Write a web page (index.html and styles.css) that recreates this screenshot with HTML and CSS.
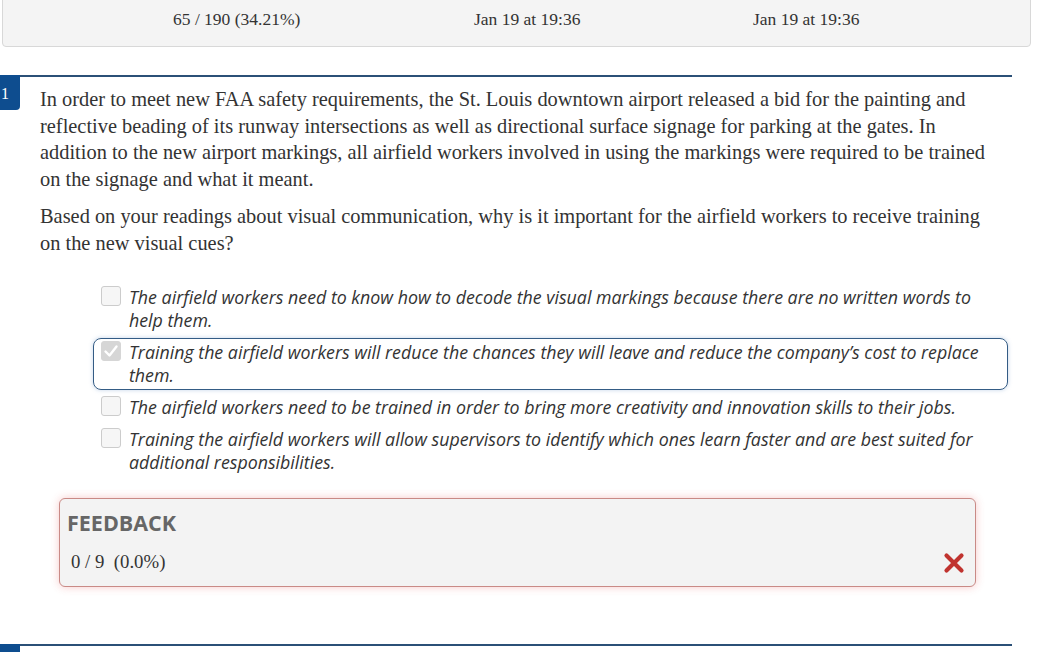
FILE: index.html
```html
<!DOCTYPE html>
<html lang="en">
<head>
  <meta charset="UTF-8" />
  <title>Quiz Results</title>
  <link rel="stylesheet" href="styles.css">
</head>
<body>
  <div class="summary">
    <div class="summary-col">
      <div class="summary-label">Submission Score</div>
      <div class="summary-value">65 / 190 (34.21%)</div>
    </div>
    <div class="summary-col">
      <div class="summary-label">Submit Time</div>
      <div class="summary-value">Jan 19 at 19:36</div>
    </div>
    <div class="summary-col">
      <div class="summary-label">Grade Time</div>
      <div class="summary-value">Jan 19 at 19:36</div>
    </div>
  </div>

  <div class="question">
    <div class="q-num">1</div>
    <div class="q-body">
      <p class="q-text">In order to meet new FAA safety requirements, the St. Louis downtown airport released a bid for the painting and reflective beading of its runway intersections as well as directional surface signage for parking at the gates. In addition to the new airport markings, all airfield workers involved in using the markings were required to be trained on the signage and what it meant.</p>
      <p class="q-text">Based on your readings about visual communication, why is it important for the airfield workers to receive training on the new visual cues?</p>

      <ul class="answers">
        <li class="answer">
          <span class="check"></span>
          <span class="answer-text">The airfield workers need to know how to decode the visual markings because there are no written words to help them.</span>
        </li>
        <li class="answer selected">
          <span class="check checked">
            <svg viewBox="0 0 20 20" width="20" height="20"><path d="M4.5 10.5 L8.5 14.5 L15.5 5.5" fill="none" stroke="#fff" stroke-width="2.4" stroke-linecap="round" stroke-linejoin="round"/></svg>
          </span>
          <span class="answer-text">Training the airfield workers will reduce the chances they will leave and reduce the company’s cost to replace them.</span>
        </li>
        <li class="answer">
          <span class="check"></span>
          <span class="answer-text">The airfield workers need to be trained in order to bring more creativity and innovation skills to their jobs.</span>
        </li>
        <li class="answer">
          <span class="check"></span>
          <span class="answer-text">Training the airfield workers will allow supervisors to identify which ones learn faster and are best suited for additional responsibilities.</span>
        </li>
      </ul>

      <div class="feedback">
        <div class="feedback-title">FEEDBACK</div>
        <div class="feedback-row">
          <span class="feedback-score">0 / 9&nbsp; (0.0%)</span>
          <svg class="wrong" viewBox="0 0 22 22" width="22" height="22"><path d="M3.5 3.5 L18.5 18.5 M18.5 3.5 L3.5 18.5" stroke="#c0332f" stroke-width="4.2" stroke-linecap="round"/></svg>
        </div>
      </div>
    </div>
  </div>

  <div class="question next">
    <div class="q-num"></div>
    <div class="q-body"></div>
  </div>
</body>
</html>
```

FILE: styles.css
```css
* {
  box-sizing: border-box;
}

body {
  margin: 0;
  font-family: "Liberation Serif", "DejaVu Serif", serif;
  color: #2d3b45;
  background: #fff;
  overflow: hidden;
}

/* Score summary */
.summary {
  margin: -24px 7px 0 2px;
  padding: 4px 0 13px 170px;
  background: #f4f4f4;
  border: 1px solid #d8d8d8;
  border-radius: 4px;
  display: grid;
  grid-template-columns: 301px 279px auto;
}

.summary-label {
  font-family: "Open Sans", sans-serif;
  font-weight: 700;
  font-size: 15px;
  line-height: 24px;
  color: #333;
}

.summary-value {
  font-size: 17.5px;
  line-height: 28px;
  color: #333;
}

/* Question */
.question {
  position: relative;
  margin: 28px 26px 0 0;
}

.q-num {
  position: absolute;
  left: 0;
  top: 0;
  width: 20px;
  height: 35px;
  padding: 7px 0 0 1px;
  background: #0e4d8f;
  border-radius: 0 0 4px 0;
  color: #fff;
  font-size: 16px;
  line-height: 24px;
}

.q-body {
  margin-left: 20px;
  border-top: 2px solid #2b5077;
  padding: 9px 0 0 20px;
}

.q-text {
  margin: 0 20px 11px 0;
  font-size: 20.4px;
  line-height: 26.5px;
  color: #333;
}

/* Answers */
.answers {
  list-style: none;
  margin: 27px 4px 0 53px;
  padding: 0;
}

.answer {
  display: flex;
  align-items: flex-start;
  gap: 8px;
  padding: 2px 20px 2px 7px;
  margin-bottom: 3px;
  border: 1px solid transparent;
  border-radius: 8px;
  font-family: "Open Sans", sans-serif;
  font-style: italic;
  font-size: 17.8px;
  line-height: 23px;
  color: #333;
}

.answer.selected {
  border-color: #345c85;
  box-shadow: 0 0 4px rgba(80, 130, 190, 0.35);
}

.check {
  flex: none;
  width: 20px;
  height: 20px;
  border: 1px solid #ccc;
  border-radius: 3px;
  background: #f6f6f6;
}

.check.checked {
  background: #d6d6d6;
  border-color: #d6d6d6;
}

.check svg {
  display: block;
  margin: -1px;
}

/* Feedback */
.feedback {
  margin: 21px 36px 0 19px;
  padding: 10px 10px 11px 7px;
  background: #f3f3f3;
  border: 1px solid #c98a86;
  border-radius: 6px;
  box-shadow: 0 0 9px rgba(230, 80, 80, 0.3);
}

.feedback-title {
  font-family: "Open Sans", sans-serif;
  font-weight: 700;
  font-size: 21.5px;
  line-height: 28px;
  color: #666;
}

.feedback-row {
  display: flex;
  justify-content: space-between;
  align-items: center;
  margin-top: 12px;
}

.feedback-score {
  font-size: 18.8px;
  line-height: 26px;
  padding-left: 4px;
  color: #333;
}

.wrong {
  margin-top: 2px;
}

.question.next {
  margin-top: 57px;
}

.question.next .q-body {
  height: 40px;
}
```
